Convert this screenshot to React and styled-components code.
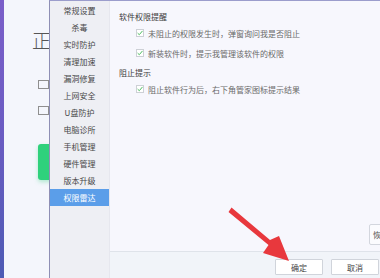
import React from "react"
import styled, { createGlobalStyle } from "styled-components"

const GlobalStyle = createGlobalStyle`
  html, body {
    margin: 0;
    padding: 0;
  }
  body {
    width: 380px;
    height: 278px;
    overflow: hidden;
    font-family: "Noto Sans CJK SC", "Noto Sans", sans-serif;
  }
`

const Page = styled.div`
  position: relative;
  display: flex;
  width: 380px;
  height: 278px;
  overflow: hidden;
  background: #f4f6fb;
`

const EdgeStrip = styled.div`
  width: 4px;
  flex-shrink: 0;
  background: linear-gradient(180deg, #7b5fc9 0%, #6a5cc2 50%, #4d5bb4 100%);
`

const Backdrop = styled.div`
  width: 45px;
  flex-shrink: 0;
  overflow: hidden;
  padding: 29px 0 0 28px;
  box-sizing: border-box;
  background: #f4f6fc;
  display: flex;
  flex-direction: column;
  align-items: flex-start;
`

const BigChar = styled.div`
  font-size: 19px;
  line-height: 22px;
  font-weight: 300;
  color: #555;
  white-space: nowrap;
`

const SmallIcon = styled.div`
  width: 9px;
  height: 7px;
  margin: ${(p) => p.$top}px 0 0 6px;
  border: 1px solid #8f8f8f;
  flex-shrink: 0;
`

const GreenButton = styled.div`
  width: 60px;
  height: 36px;
  margin: 29px 0 0 6px;
  border-radius: 3px;
  background: #2fd17c;
  box-shadow: 0 2px 4px rgba(47, 209, 124, 0.35);
  flex-shrink: 0;
`

const Dialog = styled.div`
  flex: 1;
  display: flex;
  border-left: 1px solid #8e8fb5;
  border-top: 1px solid #9b9dcc;
  min-width: 0;
`

const Sidebar = styled.ul`
  width: 59px;
  flex-shrink: 0;
  margin: 0;
  padding: 1px 0 0;
  list-style: none;
  background: #eeeff4;
  border-right: 1px solid #e6e7ee;
`

const NavItem = styled.li`
  height: 17px;
  line-height: 17px;
  text-align: center;
  font-size: 8px;
  color: ${(p) => (p.$active ? "#ffffff" : "#484848")};
  background: ${(p) => (p.$active ? "#5b9ee9" : "transparent")};
`

const Main = styled.div`
  flex: 1;
  display: flex;
  flex-direction: column;
  min-width: 0;
`

const Content = styled.div`
  flex: 1;
  background: #f7f7fd;
  padding: 10px 0 0 9px;
  display: flex;
  flex-direction: column;
`

const SectionTitle = styled.div`
  height: 12px;
  line-height: 12px;
  font-size: 8px;
  color: #3c3c3c;
  margin-top: ${(p) => p.$gap || 0}px;
`

const OptionRow = styled.div`
  height: 20px;
  display: flex;
  align-items: center;
  padding-left: 17px;
  gap: 4px;
  font-size: 8px;
  color: #6a6a6a;
  white-space: nowrap;
`

const Box = styled.span`
  width: 6px;
  height: 6px;
  border: 1px solid #cdd0d6;
  background: #fff;
  display: flex;
  align-items: center;
  justify-content: center;
  flex-shrink: 0;
`

const PartialButton = styled.div`
  margin: auto -24px 6px auto;
  width: 30px;
  height: 19px;
  border: 1px solid #d3d6de;
  border-radius: 2px;
  background: #fbfbfe;
  font-size: 8px;
  line-height: 19px;
  padding-left: 3px;
  color: #555;
  white-space: nowrap;
  overflow: hidden;
`

const Footer = styled.div`
  height: 27px;
  border-top: 1px solid #dfe3ea;
  background: #f1f4f9;
  display: flex;
  justify-content: flex-end;
  align-items: flex-start;
  gap: 8px;
  padding: 7px 1px 0 0;
  box-sizing: border-box;
`

const FooterButton = styled.button`
  width: 48px;
  height: 16px;
  padding: 0;
  border: 1px solid #d0d4db;
  border-radius: 1px;
  background: #ffffff;
  font-family: "Noto Sans CJK SC", sans-serif;
  font-size: 8px;
  color: #444;
`

const Arrow = styled.svg`
  position: absolute;
  left: 0;
  top: 0;
  pointer-events: none;
`

const Check = () => (
  <Box>
    <svg width="6" height="6" viewBox="0 0 6 6">
      <path d="M0.6 3.1 L2.3 4.7 L5.5 0.9" fill="none" stroke="#4fbd62" strokeWidth="1" />
    </svg>
  </Box>
)

const navItems = [
  "常规设置",
  "杀毒",
  "实时防护",
  "清理加速",
  "漏洞修复",
  "上网安全",
  "U盘防护",
  "电脑诊所",
  "手机管理",
  "硬件管理",
  "版本升级",
  "权限雷达",
]

const App = () => {
  return (
    <Page>
      <GlobalStyle />
      <EdgeStrip />
      <Backdrop>
        <BigChar>正在</BigChar>
        <SmallIcon $top={29} />
        <SmallIcon $top={17} />
        <GreenButton />
      </Backdrop>
      <Dialog>
        <Sidebar>
          {navItems.map((item) => (
            <NavItem key={item} $active={item === "权限雷达"}>
              {item}
            </NavItem>
          ))}
        </Sidebar>
        <Main>
          <Content>
            <SectionTitle>软件权限提醒</SectionTitle>
            <OptionRow>
              <Check />
              未阻止的权限发生时，弹窗询问我是否阻止
            </OptionRow>
            <OptionRow>
              <Check />
              新装软件时，提示我管理该软件的权限
            </OptionRow>
            <SectionTitle $gap={4}>阻止提示</SectionTitle>
            <OptionRow>
              <Check />
              阻止软件行为后，右下角管家图标提示结果
            </OptionRow>
            <PartialButton>恢复默认</PartialButton>
          </Content>
          <Footer>
            <FooterButton>确定</FooterButton>
            <FooterButton>取消</FooterButton>
          </Footer>
        </Main>
      </Dialog>
      <Arrow width="380" height="278" viewBox="0 0 380 278">
        <path
          d="M228.5 212 L231.5 207.5 L270 240 L279 236 L289 261 L263 253 L268.5 245 Z"
          fill="#e8383d"
        />
      </Arrow>
    </Page>
  )
}

export default App
